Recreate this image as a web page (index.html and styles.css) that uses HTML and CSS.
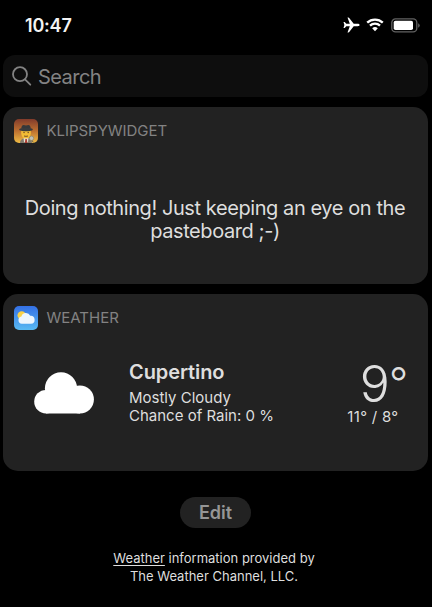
FILE: index.html
```html
<!DOCTYPE html>
<html lang="en">
<head>
<meta charset="utf-8">
<title>Widgets</title>
<link rel="stylesheet" href="styles.css">
</head>
<body>
<header class="status">
  <span class="time">10:47</span>
  <div class="indicators">
    <svg class="plane" width="17" height="16" viewBox="0 0 17 16"><path d="M16.6 8c0-.8-1-1.200-2-1.200h-3.900L6.200.9Q5.900.5 5.400.5H4.500l2.300 6.300H3.300L1.700 4.900H.5L1.400 8 .5 11.100h1.200l1.600-1.900h3.500L4.500 15.500h.9q.5 0 .8-.4l4.500-5.900h3.900c1 0 2-.4 2-1.200z"/></svg>
    <svg class="wifi" width="18" height="14" viewBox="0 0 18 14"><path d="M1.200 4.700a11.200 11.200 0 0 1 15.600 0M4 7.600a7.200 7.200 0 0 1 10 0"/><path class="dot" d="M6.200 10.300a4 4 0 0 1 5.600 0L9 13.200z"/></svg>
    <svg class="battery" width="29" height="15" viewBox="0 0 29 15"><rect class="shell" x=".8" y=".9" width="25" height="13" rx="3.700"/><rect class="charge" x="2.700" y="2.800" width="19.300" height="9.200" rx="1.800"/><path class="tip" d="M27.200 5.300q1.500.7 1.500 2.200t-1.500 2.200z"/></svg>
  </div>
</header>
<main class="widgets">
  <div class="search">
    <svg class="glass" width="20" height="21" viewBox="0 0 20 21"><circle cx="8" cy="8.200" r="7"/><path d="M13 13.400l5.300 5.300"/></svg>
    <span class="placeholder">Search</span>
  </div>
  <section class="card">
    <div class="card-head">
      <svg class="app-icon" width="24" height="24" viewBox="0 0 24 24">
        <defs><linearGradient id="spy" x1="0" y1="0" x2="0" y2="1"><stop offset="0" stop-color="#813b2b"/><stop offset=".5" stop-color="#bd7030"/><stop offset="1" stop-color="#eebb45"/></linearGradient></defs>
        <rect width="24" height="24" rx="5" fill="url(#spy)"/>
        <path d="M6 24q0-4 4-4.500h4q4 .5 4 4.500z" fill="#817a6c"/>
        <path d="M9.500 18.500h5L14 23l-2 1-2-1z" fill="#e5dfd0"/>
        <path d="M11.400 20h1.400l.5 4h-2.400z" fill="#a93c31"/>
        <path d="M7.200 11h9.600v3.500q-.6 5-4.800 5t-4.800-5z" fill="#f3bd35"/>
        <path d="M9.300 13.600h1.500m2.700 0H15M10 17q2 .7 4 0" stroke="#795024" fill="none"/>
        <path d="M7.300 9.500Q7.500 6 9.600 6q1.300 0 2.400.6 1.100-.6 2.400-.6 2.100 0 2.300 3.500z" fill="#36383a"/>
        <ellipse cx="12" cy="10.500" rx="6.900" ry="1.800" fill="#393b3d"/>
        <circle cx="17.500" cy="19.300" r="2.200" fill="#bfc1b6" stroke="#8a806a" stroke-width=".7"/>
        <path d="M18.200 21.500l1 2" stroke="#665f51"/>
      </svg>
      <h2 class="app-name name-spy">KLIPSPYWIDGET</h2>
    </div>
    <p class="message"><span class="line-one">Doing nothing! Just keeping an eye on the</span><br><span class="line-two">pasteboard ;-)</span></p>
  </section>
  <section class="card">
    <div class="card-head">
      <svg class="app-icon" width="24" height="24" viewBox="0 0 24 24">
        <defs><linearGradient id="sky" x1="0" y1="0" x2="0" y2="1"><stop offset="0" stop-color="#3470e5"/><stop offset="1" stop-color="#59baf2"/></linearGradient></defs>
        <rect width="24" height="24" rx="5" fill="url(#sky)"/>
        <circle cx="7.700" cy="9.400" r="4.200" fill="#f9d148"/>
        <path d="M7.800 17.800a3.700 3.700 0 0 1-.4-7.300 4.700 4.700 0 0 1 8.800-.7 4 4 0 0 1 .8 8z" fill="#eef6fd"/>
      </svg>
      <h2 class="app-name">WEATHER</h2>
    </div>
    <div class="forecast">
      <svg class="cloud" width="60" height="42" viewBox="0 0 60 42"><circle cx="12" cy="29.700" r="11.800"/><circle cx="27" cy="16.300" r="16.100"/><circle cx="45.900" cy="27.500" r="14"/><path d="M12 18h34v23.500H12z"/></svg>
      <div class="conditions">
        <h3 class="city">Cupertino</h3>
        <p class="sky">Mostly Cloudy</p>
        <p class="rain">Chance of Rain: 0 %</p>
      </div>
      <div class="temps">
        <div class="current">9<span class="degree">°</span></div>
        <div class="range">11° / 8°</div>
      </div>
    </div>
  </section>
</main>
<footer class="footer">
  <button class="edit">Edit</button>
  <p class="credit"><span class="credit-one"><u>Weather</u> information provided by</span><br><span class="credit-two">The Weather Channel, LLC.</span></p>
</footer>
</body>
</html>
```
FILE: styles.css
```css
* { box-sizing: border-box; margin: 0; }
body { width: 432px; height: 607px; background: #000; color: #dedede; font-family: Inter, "Liberation Sans", sans-serif; overflow: hidden; }
svg { display: block; flex: none; }
span, h2, h3, p { white-space: nowrap; }
.status { height: 55px; padding: 16px 12.500px 0 25px; display: flex; justify-content: space-between; align-items: flex-start; }
.time { font-size: 18px; line-height: 20px; font-weight: 600; color: #f3f3f3; letter-spacing: -.2px; }
.indicators { display: flex; align-items: flex-start; gap: 6.500px; padding-top: 1px; }
.plane { fill: #fff; }
.wifi { margin-top: 1px; fill: none; stroke: #fff; stroke-width: 2.300; }
.wifi .dot { fill: #fff; stroke: none; }
.battery { margin-top: .5px; }
.shell { fill: none; stroke: #626262; stroke-width: 1.300; }
.charge { fill: #fff; }
.tip { fill: #626262; }
.widgets { width: 425px; margin-left: 2.500px; }
.search { height: 42px; padding-left: 9px; display: flex; align-items: center; border-radius: 12px; background: #0e0e0e; color: #838383; }
.glass { fill: none; stroke: #838383; stroke-width: 1.800; stroke-linecap: round; }
.placeholder { margin-left: 6.500px; padding-top: 1px; font-size: 20px; line-height: 24px; letter-spacing: -.55px; }
.card { height: 177px; margin-top: 10px; border-radius: 15px; background: #222; }
.card-head { display: flex; align-items: center; padding: 12px 0 0 11px; }
.app-name { margin-left: 9px; font-size: 15px; font-weight: 400; line-height: 20px; color: #838383; }
.name-spy { letter-spacing: -.04px; }
.message { margin-top: 54px; text-align: center; font-size: 20px; line-height: 23px; letter-spacing: -.42px; }
.forecast { display: flex; align-items: flex-start; padding: 30px 21px 0 31.500px; }
.cloud { margin-top: 12px; fill: #fff; }
.conditions { margin-left: 35px; }
.city { font-size: 20px; line-height: 24px; font-weight: 600; letter-spacing: -.1px; }
.sky, .rain { font-size: 15px; line-height: 19px; }
.sky { margin-top: 4px; }
.rain { line-height: 18px; }
.temps { margin-left: auto; text-align: right; }
.current { display: flex; justify-content: flex-end; align-items: flex-start; height: 47px; font-size: 50px; font-weight: 300; line-height: 49px; }
.degree { margin-left: -1px; margin-right: -1.500px; font-size: 42px; line-height: 45px; font-weight: 300; }
.range { margin-right: 8px; font-size: 15px; line-height: 19px; letter-spacing: .3px; }
.footer { display: flex; flex-direction: column; align-items: center; padding-right: 1px; }
.edit { margin-top: 26px; width: 71px; height: 31px; padding: 0; border: 0; border-radius: 16px; background: #222; color: #969696; font: 600 18px/31px Inter, sans-serif; }
.credit { margin-top: 21px; margin-right: 3px; text-align: center; font-size: 13px; line-height: 18px; }
.credit u { text-decoration-thickness: 1px; text-underline-offset: 2px; }
```
